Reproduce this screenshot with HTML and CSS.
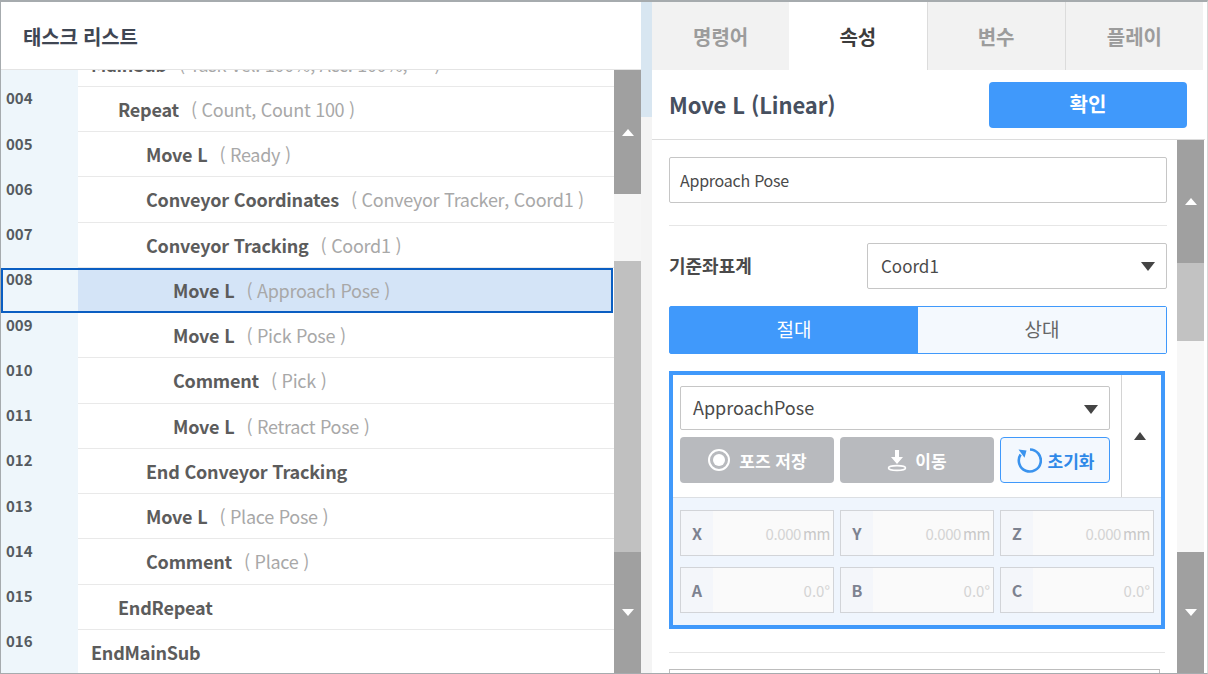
FILE: index.html
```html
<!DOCTYPE html>
<html lang="ko">
<head>
<meta charset="utf-8">
<title>태스크 리스트</title>
<link rel="stylesheet" href="styles.css">
</head>
<body>
<div class="app">
  <section class="left">
    <header class="left-head">태스크 리스트</header>
    <div class="left-body">
      <div class="rows">
        <div class="row"><span class="num">003</span><div class="cmd i1"><b>MainSub</b><span>( Task Vel. 100%, Acc. 100%, … )</span></div></div>
        <div class="row"><span class="num">004</span><div class="cmd i2"><b>Repeat</b><span>( Count, Count 100 )</span></div></div>
        <div class="row"><span class="num">005</span><div class="cmd i3"><b>Move L</b><span>( Ready )</span></div></div>
        <div class="row"><span class="num">006</span><div class="cmd i3"><b>Conveyor Coordinates</b><span>( Conveyor Tracker, Coord1 )</span></div></div>
        <div class="row"><span class="num">007</span><div class="cmd i3"><b>Conveyor Tracking</b><span>( Coord1 )</span></div></div>
        <div class="row selected"><span class="num">008</span><div class="cmd i4"><b>Move L</b><span>( Approach Pose )</span></div></div>
        <div class="row"><span class="num">009</span><div class="cmd i4"><b>Move L</b><span>( Pick Pose )</span></div></div>
        <div class="row"><span class="num">010</span><div class="cmd i4"><b>Comment</b><span>( Pick )</span></div></div>
        <div class="row"><span class="num">011</span><div class="cmd i4"><b>Move L</b><span>( Retract Pose )</span></div></div>
        <div class="row"><span class="num">012</span><div class="cmd i3"><b>End Conveyor Tracking</b></div></div>
        <div class="row"><span class="num">013</span><div class="cmd i3"><b>Move L</b><span>( Place Pose )</span></div></div>
        <div class="row"><span class="num">014</span><div class="cmd i3"><b>Comment</b><span>( Place )</span></div></div>
        <div class="row"><span class="num">015</span><div class="cmd i2"><b>EndRepeat</b></div></div>
        <div class="row"><span class="num">016</span><div class="cmd i1"><b>EndMainSub</b></div></div>
      </div>
      <div class="sbar sbar-left">
        <div class="sb-btn sb-up"><i class="tri-up"></i></div>
        <div class="sb-track t1"></div>
        <div class="sb-thumb t2"></div>
        <div class="sb-btn sb-down"><i class="tri-down"></i></div>
      </div>
    </div>
  </section>
  <div class="splitter"></div>
  <section class="right">
    <nav class="tabs">
      <div class="tab">명령어</div>
      <div class="tab active">속성</div>
      <div class="tab">변수</div>
      <div class="tab">플레이</div>
    </nav>
    <div class="title-row">
      <h1>Move L (Linear)</h1>
      <button class="ok">확인</button>
    </div>
    <div class="right-body">
      <div class="form">
        <div class="input name-input">Approach Pose</div>
        <hr class="sep">
        <div class="coord-row">
          <label>기준좌표계</label>
          <div class="input select coord-select">Coord1<i class="tri-sel"></i></div>
        </div>
        <div class="toggle">
          <div class="tg on">절대</div>
          <div class="tg">상대</div>
        </div>
        <div class="pose-box">
          <div class="pose-top">
            <div class="pose-controls">
              <div class="input select pose-select">ApproachPose<i class="tri-sel"></i></div>
              <div class="pose-btns">
                <div class="pbtn gray">
                  <svg width="24" height="24" viewBox="0 0 24 24"><circle cx="12" cy="12" r="10" fill="none" stroke="#fff" stroke-width="2"/><circle cx="12" cy="12" r="6" fill="#fff"/></svg>
                  포즈 저장
                </div>
                <div class="pbtn gray">
                  <svg width="20" height="24" viewBox="0 0 20 24"><path d="M8 2h4v7h4l-6 7-6-7h4z" fill="#fff"/><ellipse cx="10" cy="20" rx="8.5" ry="2.4" fill="none" stroke="#fff" stroke-width="1.6"/></svg>
                  이동
                </div>
                <div class="pbtn reset">
                  <svg width="26" height="26" viewBox="0 0 26 26"><path d="M14 2.5a11 11 0 1 1-9.4 5" fill="none" stroke="#3a93ee" stroke-width="2.6"/><path d="M2.5 2.4l8 1-2 7.4z" fill="#3a93ee"/></svg>
                  초기화
                </div>
              </div>
            </div>
            <div class="collapse"><i class="tri-dark"></i></div>
          </div>
          <div class="pose-grid">
            <div class="field"><span class="axis">X</span><span class="val">0.000<em>mm</em></span></div>
            <div class="field"><span class="axis">Y</span><span class="val">0.000<em>mm</em></span></div>
            <div class="field"><span class="axis">Z</span><span class="val">0.000<em>mm</em></span></div>
            <div class="field"><span class="axis">A</span><span class="val deg">0.0°</span></div>
            <div class="field"><span class="axis">B</span><span class="val deg">0.0°</span></div>
            <div class="field"><span class="axis">C</span><span class="val deg">0.0°</span></div>
          </div>
        </div>
        <hr class="sep sep-low">
        <div class="next-input"></div>
      </div>
      <div class="sbar sbar-right">
        <div class="sb-btn sb-up-r"><i class="tri-up"></i></div>
        <div class="sb-thumb t3"></div>
        <div class="sb-track t4"></div>
        <div class="sb-btn sb-down"><i class="tri-down"></i></div>
      </div>
    </div>
  </section>
</div>
</body>
</html>
```
FILE: styles.css
```css
* { box-sizing: border-box; }
html, body { margin: 0; height: 100%; overflow: hidden; background: #fff; }
body { font-family: "Noto Sans CJK KR", "Noto Sans", sans-serif; }
.app {
  width: 1208px; height: 674px; display: flex; overflow: hidden;
  border: 1px solid #a6abae; border-top-width: 2px; border-right-color: #d8d8d8;
}
.left { width: 640px; display: flex; flex-direction: column; flex: none; }
.left-head {
  height: 68px; flex: none; display: flex; align-items: center; padding: 2px 0 0 22px;
  font-size: 20px; font-weight: 700; color: #3f4653; border-bottom: 1px solid #e4e4e4; letter-spacing: -.2px;
}
.left-body { flex: 1; display: flex; min-height: 0; overflow: hidden; }
.rows { flex: 1; margin-top: -28.5px; min-width: 0; }
.row { height: 45.25px; display: flex; position: relative; }
.num {
  width: 77px; flex: none; background: #eef6fb; padding: 1.6px 0 0 5px;
  font-size: 15px; line-height: 20px; font-weight: 700; color: #555b60;
}
.cmd { flex: 1; display: flex; align-items: center; border-bottom: 1px solid #e9e9e9; font-size: 18px; white-space: nowrap; overflow: hidden; color: #aaa; }
.cmd b { font-weight: 700; color: #5c5c5c; margin-right: 12px; letter-spacing: -.2px; }
.cmd span { font-weight: 400; color: #a8a8a8; letter-spacing: -.28px; }
.i1 { padding-left: 13px; }
.i2 { padding-left: 40px; }
.i3 { padding-left: 68px; }
.i4 { padding-left: 95px; }
.selected::after { content: ""; position: absolute; inset: 0 1px 0 0; border: 2px solid #0a5ec2; pointer-events: none; }
.selected .cmd { background: linear-gradient(to right, #d4e4f7 calc(100% - 1px), #fff 1px); border-bottom: 0; }
.sbar { width: 27px; flex: none; display: flex; flex-direction: column; }
.sb-btn { background: #a0a0a0; display: flex; align-items: center; justify-content: center; }
.sb-up { height: 124px; }
.sb-up-r { height: 123px; }
.sb-down { flex: 1; }
.t1 { height: 67px; background: #f6f6f6; }
.t2 { height: 291px; background: #c0c0c0; }
.t3 { height: 78px; background: #c2c2c2; }
.t4 { height: 211px; background: #f7f7f7; }
.tri-up { width: 0; height: 0; border: 6px solid transparent; border-top: 0; border-bottom: 7px solid #fff; }
.tri-down { width: 0; height: 0; border: 6px solid transparent; border-bottom: 0; border-top: 7px solid #fff; }
.splitter { width: 11px; flex: none; background: linear-gradient(to bottom, #d8e6f1 0, #d8e6f1 115px, #f4f4f4 115px); }
.right { width: 553px; flex: none; display: flex; flex-direction: column; }
.tabs { height: 68px; flex: none; display: flex; width: 551px; }
.tab {
  flex: 1; display: flex; align-items: center; justify-content: center; background: #f2f2f2;
  font-size: 20px; font-weight: 700; color: #9c9c9c; border-left: 1px solid #dcdcdc;
}
.tab:first-child { border-left: 0; }
.tab.active { background: #fff; color: #3c3c3c; border-left: 0; }
.title-row {
  height: 70px; flex: none; display: flex; align-items: center; justify-content: space-between;
  padding: 0 18px 0 17px; border-bottom: 1px solid #dcdcdc;
}
h1 { margin: 0 0 2px; font-size: 22px; font-weight: 700; color: #47505f; letter-spacing: -.1px; }
.ok {
  width: 198px; height: 46px; border: 0; border-radius: 4px; background: #4099fb; color: #fff;
  font: 700 20px "Noto Sans CJK KR", sans-serif; padding: 0 0 2px;
}
.right-body { flex: 1; display: flex; min-height: 0; overflow: hidden; }
.form { width: 525px; flex: none; padding: 17px 10px 0 17px; }
.input {
  height: 46px; display: flex; align-items: center; border: 1px solid #c6c6c6; border-radius: 2px;
  background: #fff; color: #4a4a4a; font-size: 16px; padding: 0 0 0 10px; position: relative; letter-spacing: -.25px;
}
.sep { border: 0; border-top: 1px solid #e6e6e6; margin: 22px 0 17px; }
.coord-row { display: flex; align-items: center; justify-content: space-between; }
.coord-row label { font-size: 18px; font-weight: 700; color: #4a4a4a; padding-bottom: 2px; }
.coord-select { width: 300px; font-size: 17px; padding: 0 0 2px 13px; letter-spacing: 0; }
.tri-sel { position: absolute; right: 11px; top: 18px; width: 0; height: 0; border: 7px solid transparent; border-bottom: 0; border-top: 9px solid #444; }
.toggle { display: flex; height: 48px; margin-top: 17px; border: 1px solid #4099fb; border-radius: 2px; }
.tg { flex: 1; display: flex; align-items: center; justify-content: center; font-size: 19px; color: #666; background: #f4f9fe; padding-bottom: 3px; }
.tg.on { background: #4099fb; color: #fff; flex: none; width: 248px; }
.pose-box { margin-top: 17px; width: 496px; height: 258px; border: 4px solid #4099fb; display: flex; flex-direction: column; }
.pose-top { height: 123px; flex: none; display: flex; border-bottom: 1px solid #dcdfe3; }
.pose-controls { width: 448px; flex: none; padding: 11px 0 0 7px; }
.pose-select { width: 430px; height: 44px; font-size: 18px; padding: 0 0 2px 12px; letter-spacing: 0; }
.pose-btns { display: flex; gap: 6px; margin-top: 7px; }
.pbtn {
  height: 46px; display: flex; align-items: center; justify-content: center; gap: 8px; border-radius: 4px;
  font-size: 17px; font-weight: 700; width: 154px;
}
.gray { background: #b8babe; color: #fff; }
.reset { width: 110px; background: #f3f8fe; border: 1px solid #4099fb; color: #2f89e8; gap: 6px; }
.collapse { flex: 1; border-left: 1px solid #d4d4d4; display: flex; align-items: center; justify-content: center; }
.tri-dark { width: 0; height: 0; border: 6px solid transparent; border-top: 0; border-bottom: 8px solid #444; margin-right: 3px; }
.pose-grid {
  flex: 1; background: #eff5fd; display: grid; grid-template-columns: repeat(3, 154px); grid-auto-rows: 46px;
  column-gap: 6px; row-gap: 11px; padding: 12px 0 0 7px;
}
.field { display: flex; border: 1px solid #d2d4d8; background: #fafafa; }
.axis {
  width: 32px; flex: none; background: #f4f6fa; display: flex; align-items: center; justify-content: center;
  font-size: 16px; font-weight: 700; color: #7d8290;
}
.val { flex: 1; display: flex; align-items: center; justify-content: flex-end; padding-right: 3px; font-size: 15px; color: #d4d4d4; letter-spacing: -.4px; }
.val em { font-style: normal; margin-left: 2px; color: #c8c8c8; font-size: 15px; }
.deg { font-size: 15px; letter-spacing: 0; }
.sep-low { margin: 23px 0 16px; width: 496px; }
.next-input { width: 491px; height: 40px; border: 1px solid #bdbdbd; }
```
